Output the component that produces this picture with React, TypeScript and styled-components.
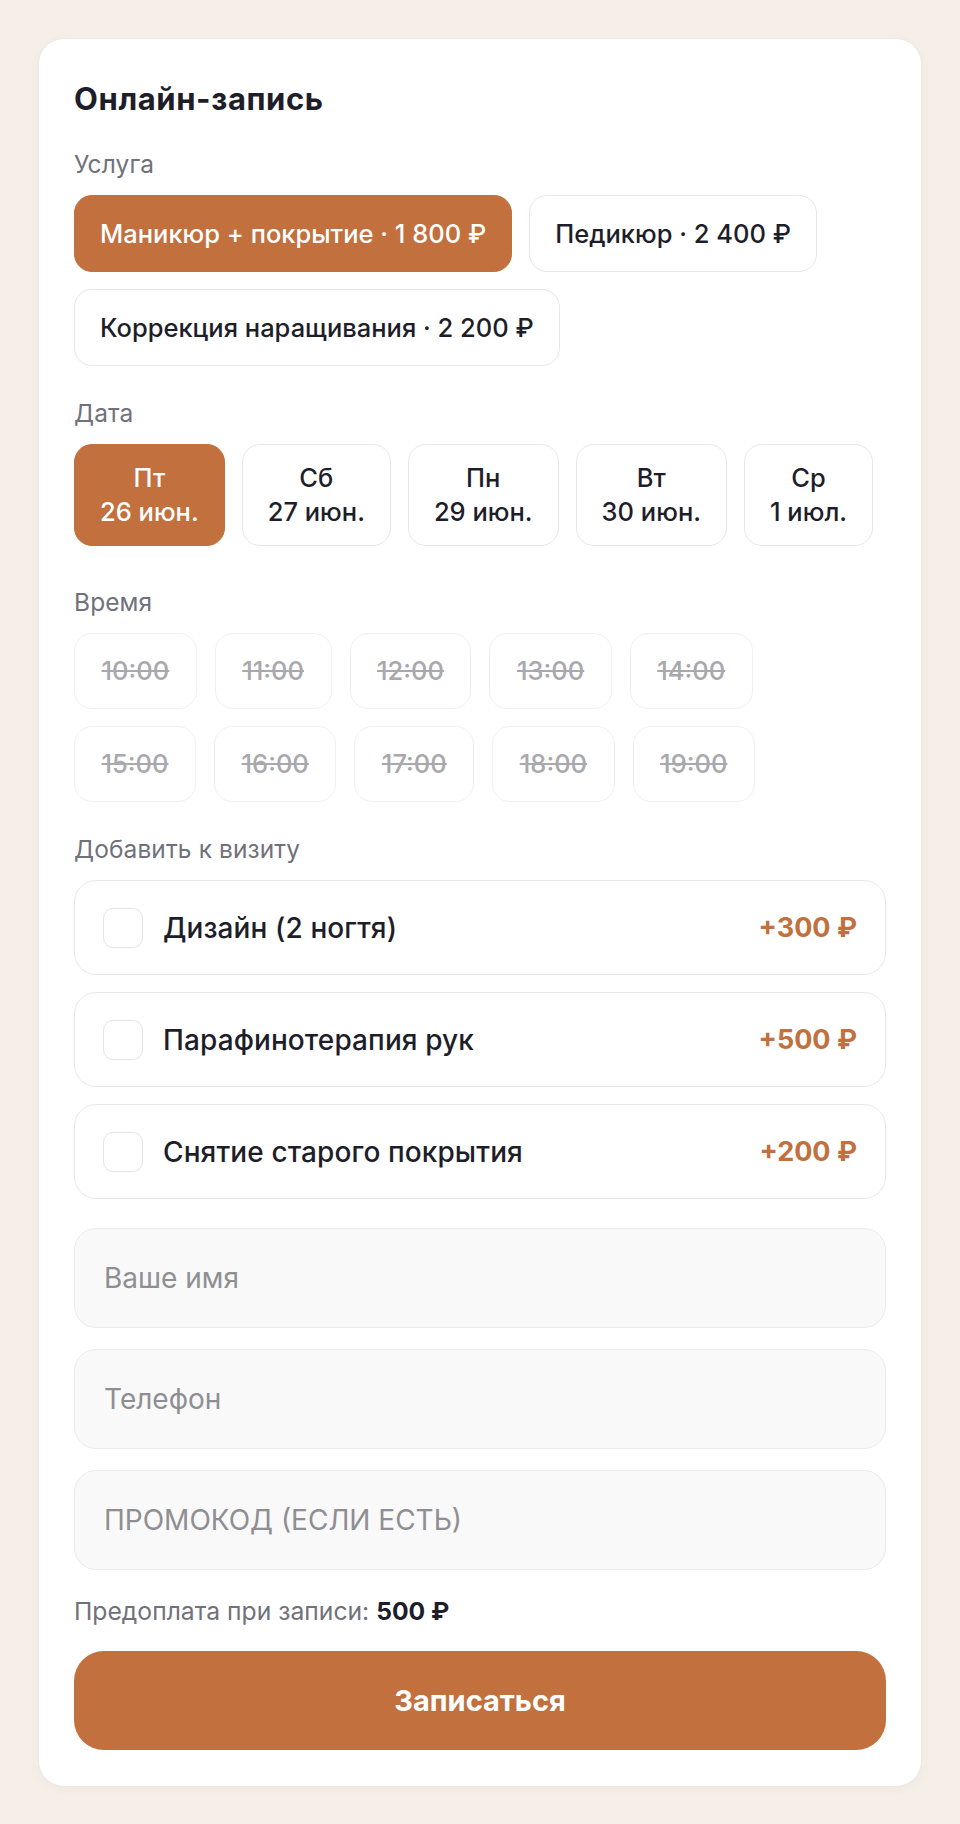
import React from 'react';
import styled, { createGlobalStyle } from 'styled-components';

const ACCENT = '#c1703e';
const DARK = '#1e1e2a';
const MUTED = '#71717b';

const Global = createGlobalStyle`
  html, body { margin: 0; padding: 0; background: #f5efe8; }
  body { font-family: Inter, "Noto Sans", sans-serif; color: ${DARK}; }
  * { box-sizing: border-box; }
`;

const Page = styled.div`
  padding: 38px;
  min-height: 1824px;
`;

const Card = styled.form`
  background: #fff;
  border: 1px solid #efe8e0;
  border-radius: 26px;
  box-shadow: 0 2px 10px rgba(120, 90, 60, 0.05);
  padding: 42px 35px 36px;
  display: flex;
  flex-direction: column;
`;

const Title = styled.h2`
  margin: 0;
  font-size: 31px;
  line-height: 36px;
  font-weight: 700;
  letter-spacing: 0.6px;
  color: ${DARK};
`;

const Section = styled.div<{ $extra?: number }>`
  margin-top: 33px;
  margin-bottom: ${(p) => p.$extra ?? 0}px;
`;

const Label = styled.div`
  font-size: 24.5px;
  line-height: 28px;
  letter-spacing: 0.1px;
  color: ${MUTED};
  margin-bottom: 17px;
`;

const ChipRow = styled.div<{ $max?: number; $gap?: number }>`
  display: flex;
  flex-wrap: wrap;
  gap: 17px ${(p) => p.$gap ?? 17}px;
  max-width: ${(p) => (p.$max ? `${p.$max}px` : 'none')};
`;

const Chip = styled.button<{ $active?: boolean }>`
  font-family: inherit;
  font-size: 25.5px;
  line-height: 34px;
  font-weight: 500;
  padding: 20.5px 25px;
  border-radius: 18px;
  border: 1px solid ${(p) => (p.$active ? ACCENT : '#e7e7e7')};
  background: ${(p) => (p.$active ? ACCENT : '#fff')};
  color: ${(p) => (p.$active ? '#fff' : DARK)};
  cursor: pointer;
`;

const DateChip = styled(Chip)`
  display: flex;
  flex-direction: column;
  align-items: center;
  padding: 16px 25px;
`;

const TimeChip = styled(Chip)`
  border-color: #f1f1f1;
  color: #a8a8ad;
  text-decoration: line-through;
  padding: 20px 26.5px;
  cursor: default;
`;

const AddonList = styled.div`
  display: flex;
  flex-direction: column;
  gap: 17px;
`;

const Addon = styled.label`
  display: flex;
  align-items: center;
  gap: 20px;
  height: 95px;
  padding: 0 28px;
  border: 1px solid #e8e8e8;
  border-radius: 22px;
  cursor: pointer;
`;

const Check = styled.span`
  width: 40px;
  height: 40px;
  border: 1.5px solid #e4e4e4;
  border-radius: 10px;
  flex: none;
`;

const AddonName = styled.span`
  flex: 1;
  font-size: 28px;
  font-weight: 500;
  letter-spacing: 0.1px;
  color: ${DARK};
`;

const AddonPrice = styled.span`
  font-size: 27px;
  font-weight: 700;
  color: ${ACCENT};
`;

const Fields = styled.div`
  margin-top: 29px;
  display: flex;
  flex-direction: column;
  gap: 21px;
`;

const Input = styled.input<{ $upper?: boolean }>`
  height: 100px;
  width: 100%;
  border: 1px solid #ebebeb;
  background: #f9f9f9;
  border-radius: 22px;
  padding: 0 29px;
  font-family: inherit;
  font-size: 28px;
  color: ${DARK};
  outline: none;
  &::placeholder {
    color: #8e8e93;
    text-transform: ${(p) => (p.$upper ? 'uppercase' : 'none')};
  }
`;

const Prepay = styled.div`
  margin-top: 27px;
  font-size: 24.7px;
  line-height: 28px;
  color: ${MUTED};
  strong {
    color: ${DARK};
    font-weight: 700;
  }
`;

const Submit = styled.button`
  margin-top: 26px;
  height: 99px;
  border: none;
  border-radius: 30px;
  background: ${ACCENT};
  color: #fff;
  font-family: inherit;
  font-size: 29px;
  font-weight: 700;
  cursor: pointer;
`;

const services = [
  { name: 'Маникюр + покрытие · 1 800 ₽', active: true },
  { name: 'Педикюр · 2 400 ₽' },
  { name: 'Коррекция наращивания · 2 200 ₽' },
];

const dates = [
  { d: 'Пт', n: '26 июн.', active: true },
  { d: 'Сб', n: '27 июн.' },
  { d: 'Пн', n: '29 июн.' },
  { d: 'Вт', n: '30 июн.' },
  { d: 'Ср', n: '1 июл.' },
];

const times = ['10:00', '11:00', '12:00', '13:00', '14:00', '15:00', '16:00', '17:00', '18:00', '19:00'];

const addons = [
  { name: 'Дизайн (2 ногтя)', price: '+300 ₽' },
  { name: 'Парафинотерапия рук', price: '+500 ₽' },
  { name: 'Снятие старого покрытия', price: '+200 ₽' },
];

export default function App() {
  return (
    <Page>
      <Global />
      <Card onSubmit={(e) => e.preventDefault()}>
        <Title>Онлайн-запись</Title>

        <Section>
          <Label>Услуга</Label>
          <ChipRow>
            {services.map((s) => (
              <Chip type="button" key={s.name} $active={s.active}>
                {s.name}
              </Chip>
            ))}
          </ChipRow>
        </Section>

        <Section $extra={9}>
          <Label>Дата</Label>
          <ChipRow>
            {dates.map((d) => (
              <DateChip type="button" key={d.n} $active={d.active}>
                <span>{d.d}</span>
                <span>{d.n}</span>
              </DateChip>
            ))}
          </ChipRow>
        </Section>

        <Section>
          <Label>Время</Label>
          <ChipRow $max={770} $gap={18}>
            {times.map((t) => (
              <TimeChip type="button" key={t} disabled>
                {t}
              </TimeChip>
            ))}
          </ChipRow>
        </Section>

        <Section>
          <Label>Добавить к визиту</Label>
          <AddonList>
            {addons.map((a) => (
              <Addon key={a.name}>
                <Check />
                <AddonName>{a.name}</AddonName>
                <AddonPrice>{a.price}</AddonPrice>
              </Addon>
            ))}
          </AddonList>
        </Section>

        <Fields>
          <Input placeholder="Ваше имя" />
          <Input placeholder="Телефон" />
          <Input placeholder="Промокод (если есть)" $upper />
        </Fields>

        <Prepay>
          Предоплата при записи: <strong>500 ₽</strong>
        </Prepay>

        <Submit type="submit">Записаться</Submit>
      </Card>
    </Page>
  );
}
